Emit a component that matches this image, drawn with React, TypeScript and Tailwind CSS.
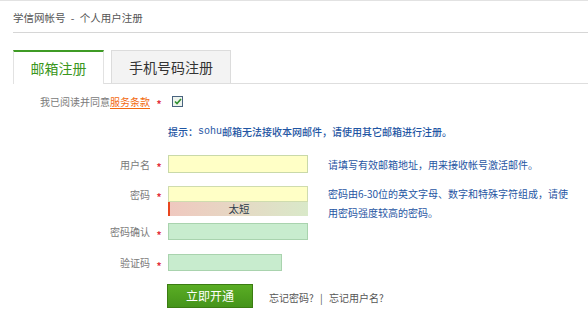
const cjk = "font-['Noto_Sans_CJK_SC','Noto_Sans',sans-serif]";

function Star() {
  return (
    <span className="w-[18px] shrink-0 translate-y-[3px] text-center text-[10px] font-bold leading-none text-[#e2323c]">
      *
    </span>
  );
}

function Label({ text }: { text: string }) {
  return (
    <div className="w-[150px] shrink-0 text-right text-[10px] text-[#7a7a7a]">{text}</div>
  );
}

function App() {
  return (
    <div className={`w-[588px] h-[312px] overflow-hidden bg-white border-t border-[#e2e2e2] ${cjk}`}>
      {/* header */}
      <div className="ml-[13px] h-[32px] pt-[4px] leading-[26px] border-b border-[#d6d6d6] text-[10.5px] text-[#555]">
        学信网帐号 <span className="mx-[3px]">-</span> 个人用户注册
      </div>

      {/* tabs */}
      <div className="mt-[17px] ml-[13px] flex h-[34px] items-end border-b border-[#dedede]">
        <div className="-mb-px flex h-[34px] w-[91px] items-center justify-center border-x border-t-2 border-x-[#e2e2e2] border-t-[#3f9b25] bg-white text-[14px] text-[#3a9620]">
          邮箱注册
        </div>
        <div className="ml-[7px] flex h-[33px] w-[120px] items-center justify-center border-x border-t border-[#dcdcdc] bg-[#f3f3f3] text-[14px] text-[#333]">
          手机号码注册
        </div>
      </div>

      {/* agreement */}
      <div className="mt-[8px] flex h-[18px] items-center">
        <div className="w-[150px] shrink-0 text-right text-[10px] text-[#7a7a7a]">
          我已阅读并同意<span className="text-[#f26a10] underline underline-offset-2">服务条款</span>
        </div>
        <Star />
        <span className="ml-[4px] flex h-[11px] w-[11px] items-center justify-center border border-[#49637f] bg-[#eef4ee]">
          <svg width="8" height="7" viewBox="0 0 8 7">
            <path d="M1 3.5 L3 5.5 L7 1" fill="none" stroke="#2f8f2f" strokeWidth="1.6" />
          </svg>
        </span>
      </div>

      {/* hint */}
      <div className="mt-[12px] flex h-[18px] items-center pl-[168px] text-[10px] font-medium text-[#1f56a3]">
        提示：<span className="font-['Liberation_Mono',monospace] text-[10px]">sohu</span>邮箱无法接收本网邮件，请使用其它邮箱进行注册。
      </div>

      {/* username */}
      <div className="mt-[15px] flex h-[18px] items-center">
        <Label text="用户名" />
        <Star />
        <div className="h-[18px] w-[140px] border border-[#c9d9a9] bg-[#ffffc6]" />
        <div className="ml-[20px] text-[10px] text-[#1f56a3]">请填写有效邮箱地址，用来接收帐号激活邮件。</div>
      </div>

      {/* password */}
      <div className="mt-[13px] flex items-start">
        <div className="flex h-[16px] items-center">
          <Label text="密码" />
          <Star />
        </div>
        <div className="w-[140px]">
          <div className="h-[16px] border border-[#cfdcae] bg-[#ffffc6]" />
          <div className="flex h-[14px] items-center justify-center border-l-2 border-[#e8461e] bg-gradient-to-r from-[#efc8bf] to-[#d9e9c9] text-[10.5px] text-[#2b3b4b]">
            太短
          </div>
        </div>
        <div className="-mt-[2px] ml-[20px] w-[250px] text-[10px] leading-[19px] text-[#1f56a3]">
          密码由6-30位的英文字母、数字和特殊字符组成，请使用密码强度较高的密码。
        </div>
      </div>

      {/* confirm */}
      <div className="mt-[1px] flex h-[17px] items-center">
        <Label text="密码确认" />
        <Star />
        <div className="h-[17px] w-[140px] border border-[#a9d3ae] bg-[#c8ecce]" />
      </div>

      {/* captcha */}
      <div className="mt-[14px] flex h-[17px] items-center">
        <Label text="验证码" />
        <Star />
        <div className="h-[17px] w-[114px] border border-[#a9d3ae] bg-[#c8ecce]" />
      </div>

      {/* submit */}
      <div className="mt-[13px] flex h-[24px] items-center pl-[167px]">
        <button className="h-[24px] w-[86px] border border-[#3b7c12] bg-gradient-to-b from-[#5aad24] to-[#45941a] text-[12px] text-white">
          立即开通
        </button>
        <div className="ml-[16px] mt-[3px] text-[10px] text-[#555]">
          忘记密码? <span className="mx-[4px]">|</span> 忘记用户名?
        </div>
      </div>
    </div>
  );
}

export default App;
